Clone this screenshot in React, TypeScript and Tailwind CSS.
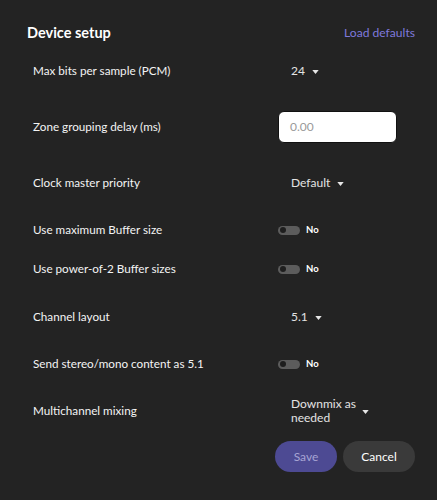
import React from "react";

function Caret({ className = "ml-[7px]" }: { className?: string }) {
  return (
    <svg width="7" height="4" viewBox="0 0 8 5" className={`${className} mt-[1px]`}>
      <path d="M0 0 L8 0 L4 5 Z" fill="#e6e6e6" />
    </svg>
  );
}

function Dropdown({ value }: { value: React.ReactNode }) {
  return (
    <div className="flex items-center pl-[13px] text-[12px] text-[#e4e4e4]">
      <span>{value}</span>
      <Caret />
    </div>
  );
}

function Toggle() {
  return (
    <div className="flex items-center">
      <div className="relative h-[9px] w-[22px] rounded-full bg-[#5c5c5c]">
        <div className="absolute left-[2px] top-[1.5px] h-[6px] w-[6px] rounded-full bg-[#1e1e1e]" />
      </div>
      <span className="ml-[6px] text-[9.5px] font-bold text-white">No</span>
    </div>
  );
}

function Row({ label, h, children }: { label: string; h: string; children: React.ReactNode }) {
  return (
    <div className={`flex items-center ${h}`}>
      <div className="w-[251px] pl-[6px] text-[11.7px] text-[#f4f4f4]">{label}</div>
      <div className="flex-1">{children}</div>
    </div>
  );
}

export default function App() {
  return (
    <div
      className="h-[500px] w-[437px] bg-[#232323] pl-[27px] pr-[22px]"
      style={{ fontFamily: "Lato, 'Noto Sans', sans-serif" }}
    >
      <div className="flex h-[43px] items-end justify-between">
        <div className="flex h-[20px] w-full items-center justify-between">
          <span className="text-[14.5px] font-bold text-white">Device setup</span>
          <span className="text-[12.1px] text-[#7f79dc]">Load defaults</span>
        </div>
      </div>
      <Row label="Max bits per sample (PCM)" h="h-[56px]">
        <Dropdown value="24" />
      </Row>
      <Row label="Zone grouping delay (ms)" h="h-[56px]">
        <div className="flex h-[32px] w-[119px] items-center rounded-[6px] border border-[#111] bg-white pl-[11px] text-[12px] text-[#9a9a9a]">
          0.00
        </div>
      </Row>
      <Row label="Clock master priority" h="h-[56px]">
        <Dropdown value="Default" />
      </Row>
      <Row label="Use maximum Buffer size" h="h-[38px]">
        <Toggle />
      </Row>
      <Row label="Use power-of-2 Buffer sizes" h="h-[40px]">
        <Toggle />
      </Row>
      <Row label="Channel layout" h="h-[56px]">
        <Dropdown value="5.1" />
      </Row>
      <Row label="Send stereo/mono content as 5.1" h="h-[38px]">
        <Toggle />
      </Row>
      <Row label="Multichannel mixing" h="h-[56px]">
        <div className="flex items-center pl-[13px] text-[12px] leading-[14px] text-[#e4e4e4]">
          <span className="w-[66px]">Downmix as needed</span>
          <Caret className="ml-[5px]" />
        </div>
      </Row>
      <div className="mt-[2px] flex justify-end gap-[6px]">
        <button className="h-[31px] w-[62px] rounded-full bg-[#4d4a93] text-[12px] text-[#a7a4d4]">
          Save
        </button>
        <button className="h-[31px] w-[72px] rounded-full bg-[#3a3a3a] text-[12px] text-white">
          Cancel
        </button>
      </div>
    </div>
  );
}
